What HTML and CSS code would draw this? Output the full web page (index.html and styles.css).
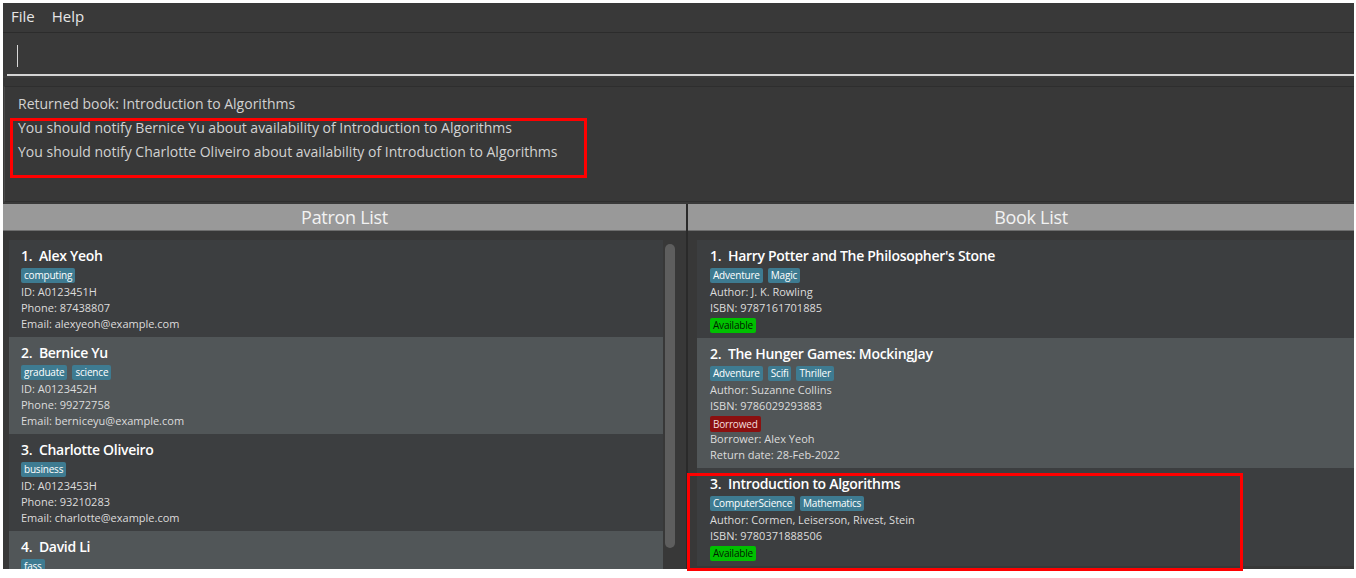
FILE: index.html
```html
<!DOCTYPE html>
<html>
<head>
<meta charset="utf-8">
<link rel="stylesheet" href="styles.css">
</head>
<body>
<div class="app">
  <div class="menubar">
    <span class="menu-item">File</span>
    <span class="menu-item">Help</span>
  </div>
  <div class="command">
    <div class="field"><span class="caret"></span></div>
  </div>
  <div class="gap"></div>
  <div class="result">
    <div class="result-line">Returned book: Introduction to Algorithms</div>
    <div class="result-line">You should notify Bernice Yu about availability of Introduction to Algorithms</div>
    <div class="result-line">You should notify Charlotte Oliveiro about availability of Introduction to Algorithms</div>
  </div>
  <div class="panels">
    <div class="panel panel-patron">
      <div class="panel-head">Patron List</div>
      <div class="list-wrap">
        <div class="list">
          <div class="card dark">
            <div class="name">1.&nbsp; Alex Yeoh</div>
            <div class="tags"><span class="tag">computing</span></div>
            <div class="line">ID: A0123451H</div>
            <div class="line">Phone: 87438807</div>
            <div class="line">Email: alexyeoh@example.com</div>
          </div>
          <div class="card light">
            <div class="name">2.&nbsp; Bernice Yu</div>
            <div class="tags"><span class="tag">graduate</span><span class="tag">science</span></div>
            <div class="line">ID: A0123452H</div>
            <div class="line">Phone: 99272758</div>
            <div class="line">Email: berniceyu@example.com</div>
          </div>
          <div class="card dark">
            <div class="name">3.&nbsp; Charlotte Oliveiro</div>
            <div class="tags"><span class="tag">business</span></div>
            <div class="line">ID: A0123453H</div>
            <div class="line">Phone: 93210283</div>
            <div class="line">Email: charlotte@example.com</div>
          </div>
          <div class="card light">
            <div class="name">4.&nbsp; David Li</div>
            <div class="tags"><span class="tag">fass</span></div>
            <div class="line">ID: A0123454H</div>
            <div class="line">Phone: 91031282</div>
            <div class="line">Email: lidavid@example.com</div>
          </div>
        </div>
        <div class="scrolltrack"><div class="thumb"></div></div>
      </div>
    </div>
    <div class="divider"></div>
    <div class="panel panel-book">
      <div class="panel-head">Book List</div>
      <div class="list book-list">
        <div class="card dark">
          <div class="name">1.&nbsp; Harry Potter and The Philosopher's Stone</div>
          <div class="tags"><span class="tag">Adventure</span><span class="tag">Magic</span></div>
          <div class="line">Author: J. K. Rowling</div>
          <div class="line">ISBN: 9787161701885</div>
          <div class="status"><span class="badge available">Available</span></div>
        </div>
        <div class="card light">
          <div class="name">2.&nbsp; The Hunger Games: MockingJay</div>
          <div class="tags"><span class="tag">Adventure</span><span class="tag">Scifi</span><span class="tag">Thriller</span></div>
          <div class="line">Author: Suzanne Collins</div>
          <div class="line">ISBN: 9786029293883</div>
          <div class="status"><span class="badge borrowed">Borrowed</span></div>
          <div class="line">Borrower: Alex Yeoh</div>
          <div class="line">Return date: 28-Feb-2022</div>
        </div>
        <div class="card dark">
          <div class="name">3.&nbsp; Introduction to Algorithms</div>
          <div class="tags"><span class="tag">ComputerScience</span><span class="tag">Mathematics</span></div>
          <div class="line">Author: Cormen, Leiserson, Rivest, Stein</div>
          <div class="line">ISBN: 9780371888506</div>
          <div class="status"><span class="badge available">Available</span></div>
        </div>
      </div>
    </div>
  </div>
</div>
<div class="mark mark-result"></div>
<div class="mark mark-book"></div>
</body>
</html>
```

FILE: styles.css
```css
html, body {
  margin: 0;
  padding: 0;
  background: #ffffff;
}
body {
  font-family: "Open Sans", "Noto Sans", "Liberation Sans", sans-serif;
  color: #dddddd;
  position: relative;
  min-height: 578px;
}
.app {
  margin: 3px 0 0 3px;
  width: 1351px;
  height: 566px;
  overflow: hidden;
  background: #393939;
  display: flex;
  flex-direction: column;
}
.menubar {
  height: 30px;
  flex: none;
  display: flex;
  align-items: flex-start;
  gap: 17px;
  padding: 3px 0 0 8px;
  border-bottom: 1px solid #2c2c2c;
  font-size: 15px;
  line-height: 21px;
  color: #e6e6e6;
  box-sizing: border-box;
}
.command {
  height: 43px;
  flex: none;
  padding: 0 0 0 4px;
  box-sizing: border-box;
  display: flex;
  align-items: flex-end;
}
.field {
  flex: 1;
  height: 42px;
  border-bottom: 2px solid #d4d4d4;
  display: flex;
  align-items: center;
  padding-left: 10px;
  box-sizing: border-box;
}
.caret {
  width: 1px;
  height: 22px;
  background: #d8d8d8;
  margin-top: 4px;
}
.gap {
  height: 10px;
  flex: none;
  border-top: 2px solid #3c3c3c;
  box-sizing: border-box;
  background: #363636;
}
.result {
  height: 116px;
  flex: none;
  box-sizing: border-box;
  margin-left: 1px;
  border-top: 1px solid #2e2e2e;
  border-left: 1px solid #4a4a4a;
  border-bottom: 1px solid #2e2e2e;
  padding: 5px 0 0 13px;
  background: #383838;
  font-size: 14px;
  color: #d2d2d2;
}
.result-line {
  height: 24px;
  line-height: 24px;
}
.mark {
  position: absolute;
  border: 3px solid #ff0000;
  box-sizing: border-box;
  pointer-events: none;
}
.mark-result {
  left: 10px;
  top: 118px;
  width: 577px;
  height: 60px;
}
.mark-book {
  left: 687px;
  top: 473px;
  width: 556px;
  height: 98px;
}
.panels {
  flex: 1;
  display: flex;
  margin-top: 2px;
  min-height: 0;
}
.panel {
  display: flex;
  flex-direction: column;
  min-height: 0;
}
.panel-patron {
  width: 683px;
  flex: none;
}
.panel-book {
  width: 686px;
  flex: none;
}
.divider {
  width: 2px;
  flex: none;
  background: #2a2a2a;
}
.panel-head {
  height: 27px;
  flex: none;
  background: #999999;
  border-bottom: 1px solid #6e6e6e;
  box-sizing: border-box;
  text-align: center;
  font-size: 18px;
  line-height: 26px;
  color: #f2f2f2;
  letter-spacing: -0.3px;
}
.list-wrap {
  flex: 1;
  display: flex;
  min-height: 0;
  padding-top: 9px;
  background: #383838;
}
.list {
  display: flex;
  flex-direction: column;
  min-height: 0;
  overflow: hidden;
}
.panel-patron .list {
  width: 654px;
  margin-left: 6px;
  flex: none;
}
.book-list {
  flex: 1;
  padding: 9px 0 0 9px;
  background: #383838;
}
.scrolltrack {
  flex: 1;
  padding: 4px 5px 0 2px;
  display: flex;
  flex-direction: column;
}
.thumb {
  width: 10px;
  height: 304px;
  border-radius: 5px;
  background: #5e5e5e;
}
.card {
  flex: none;
  padding: 6px 12px 5px 12px;
}
.book-list .card {
  padding-left: 13px;
}
.card.dark {
  background: #3c3e40;
}
.card.light {
  background: #515658;
}
.name {
  height: 20px;
  line-height: 20px;
  font-size: 14px;
  font-weight: 600;
  color: #ffffff;
  letter-spacing: -0.3px;
}
.tags {
  height: 18px;
  display: flex;
  gap: 5px;
  align-items: flex-start;
  padding-top: 2px;
  box-sizing: border-box;
}
.tag, .badge {
  height: 15px;
  line-height: 15px;
  padding: 0 3px;
  border-radius: 2px;
  font-size: 10px;
  letter-spacing: -0.2px;
  color: #ffffff;
  background: #3e7b91;
}
.line {
  height: 16px;
  line-height: 16px;
  font-size: 11px;
  color: #dcdcdc;
}
.status {
  height: 17px;
  padding-top: 2px;
  box-sizing: border-box;
  display: flex;
}
.badge.available {
  background: #00c000;
  color: #002000;
}
.badge.borrowed {
  background: #8b1010;
  color: #f4dede;
  height: 16px;
  line-height: 16px;
}
```
